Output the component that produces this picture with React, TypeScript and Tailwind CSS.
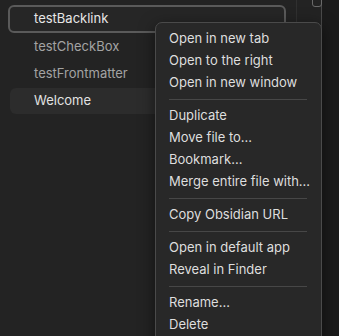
import React from "react";

const files = [
  { name: "testBacklink", state: "focused" },
  { name: "testCheckBox", state: "normal" },
  { name: "testFrontmatter", state: "normal" },
  { name: "Welcome", state: "active" },
];

const menuGroups = [
  ["Open in new tab", "Open to the right", "Open in new window"],
  ["Duplicate", "Move file to...", "Bookmark...", "Merge entire file with..."],
  ["Copy Obsidian URL"],
  ["Open in default app", "Reveal in Finder"],
  ["Rename...", "Delete"],
];

const App = () => {
  return (
    <div
      className="relative w-[339px] h-[336px] overflow-hidden bg-[#232323] flex"
      style={{ fontFamily: "Inter, 'Liberation Sans', sans-serif" }}
    >
      {/* File list */}
      <div className="w-[297px] h-full flex flex-col pt-[5px] pl-[8px] pr-[10px] border-r border-[#303030]">
        {files.map((f) => (
          <div
            key={f.name}
            className={
              "flex items-center rounded-[6px] text-[13px] " +
              (f.state === "focused"
                ? "h-[28px] pl-[24px] border-2 border-[#5a5a5a] bg-[#262626] text-[#e6e6e6]"
                : f.state === "active"
                ? "h-[26px] mt-px bg-[#2c2c2c] text-[#e2e2e2] ml-[2px] pl-[24px]"
                : "h-[27px] pl-[26px] text-[#a3a3a3]")
            }
          >
            {f.name}
          </div>
        ))}
      </div>

      {/* Right strip */}
      <div className="flex-1 h-full flex">
        <div className="w-[24px] h-full relative">
          <div className="absolute left-[15px] top-[-4px] w-[10px] h-[11px] rounded-[3px] border-[1.5px] border-[#6a6a6a]" />
        </div>
        <div className="flex-1 h-full bg-[#1b1b1b] border-l border-[#4a4a4a]" />
      </div>

      {/* Context menu */}
      <div className="absolute left-[155px] top-[22px] w-[167px] h-[330px] bg-[#282828] border border-[#4a4a4a] rounded-[7px] py-[5px] px-[13px] text-[13px] text-[#dedede] shadow-[0_4px_16px_rgba(0,0,0,0.5)]">
        {menuGroups.map((group, gi) => (
          <div key={gi}>
            {gi > 0 && <div className="my-[5px] h-px bg-[#474747] mr-[1px]" />}
            {group.map((item) => (
              <div key={item} className="h-[22px] flex items-center whitespace-nowrap">
                {item}
              </div>
            ))}
          </div>
        ))}
      </div>
    </div>
  );
};

export default App;
